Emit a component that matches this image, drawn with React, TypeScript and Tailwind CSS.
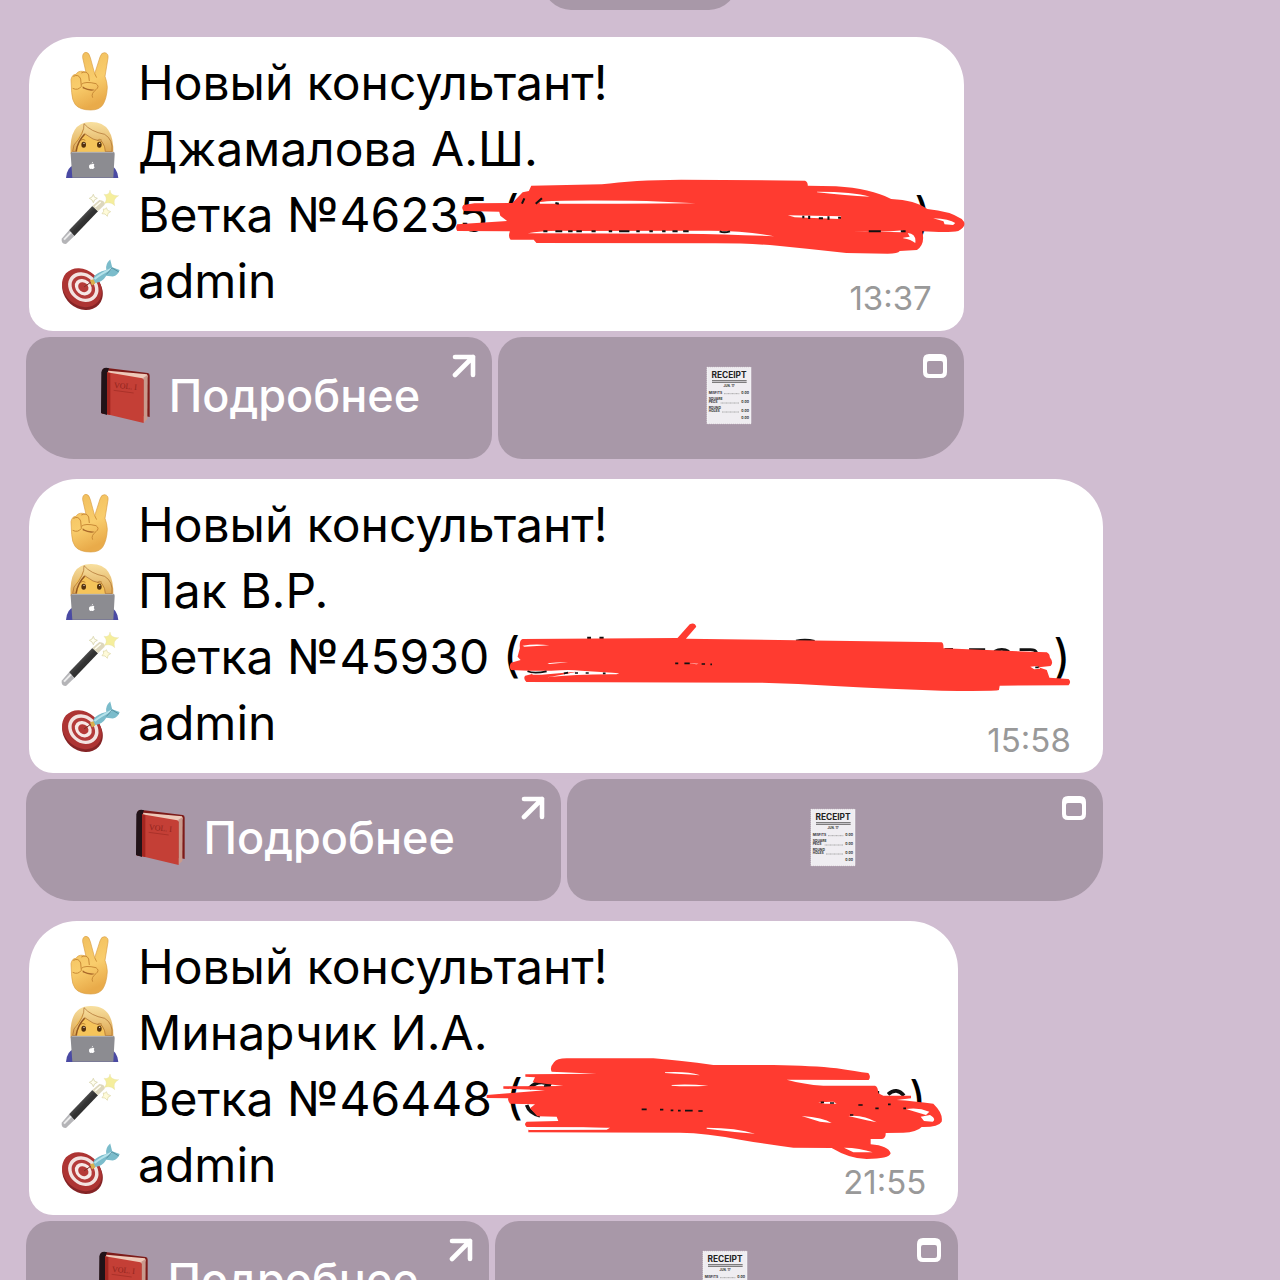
import { ReactNode } from "react";

interface Message {
    id: string;
    name: string;
    branch: string;
    time: string;
    hiddenWidth: string;
    scribble: ReactNode;
}

function VictoryHand() {
    return (
        <svg viewBox="30 33 180 198" className="h-[66px] w-[60px] shrink-0" aria-hidden="true">
            <defs>
                <linearGradient id="skin" x1="0" y1="0" x2="0.3" y2="1">
                    <stop offset="0" stopColor="#f0bd5c" />
                    <stop offset="0.6" stopColor="#f9cd6c" />
                    <stop offset="1" stopColor="#e9ab4a" />
                </linearGradient>
            </defs>
            <path
                d="M108 100 L98 56 Q97 41 108 40 Q117 40 121 56 L134 104 L150 54 Q154 40 164 41 Q176 43 174 57 L165 112 Q171 128 172 145 Q170 180 158 198 Q148 213 122 213 Q90 213 76 197 Q66 184 65 160 L63 122 Q66 106 78 106 Q84 95 98 97 Z"
                fill="url(#skin)"
                stroke="#d99f45"
                strokeWidth="2"
            />
            <path d="M94 102 Q110 94 116 108 L118 126 M70 112 Q86 104 92 120 L94 142 Q84 156 68 148" fill="none" stroke="#c98a36" strokeWidth="3" />
            <path d="M94 136 Q106 126 138 134 Q150 142 138 152 Q122 164 128 176" fill="none" stroke="#c98a36" strokeWidth="3" />
            <path d="M98 142 Q110 152 134 152 Q124 160 98 148 Z" fill="#a9682a" />
            <path d="M134 104 L140 116" stroke="#d2953b" strokeWidth="3" />
        </svg>
    );
}

function Technologist() {
    return (
        <svg viewBox="30 231 180 198" className="h-[66px] w-[60px] shrink-0" aria-hidden="true">
            <defs>
                <linearGradient id="hair" x1="0" y1="0" x2="0" y2="1">
                    <stop offset="0" stopColor="#f8e0a0" />
                    <stop offset="1" stopColor="#dca550" />
                </linearGradient>
            </defs>
            <path d="M48 417 Q50 385 72 378 L180 378 Q202 385 205 417 Z" fill="#4a4aa3" />
            <path d="M62 345 Q56 249 122 249 Q193 247 190 345 Z" fill="url(#hair)" />
            <path d="M74 345 Q68 308 88 290 L104 264 Q128 298 162 300 Q178 312 178 345 Z" fill="#f5c45a" />
            <path d="M102 254 Q104 282 72 318 L68 338 L80 338 Q80 308 104 284 Q128 304 156 308 Q166 322 166 338 L186 338 Q190 302 164 286 Q122 278 102 254 Z" fill="url(#hair)" stroke="#a8682b" strokeWidth="2" />
            <path d="M78 337 Q84 306 104 286" stroke="#8f5420" strokeWidth="4" fill="none" />
            <ellipse cx="101" cy="317" rx="7" ry="9" fill="#54320f" />
            <ellipse cx="148" cy="317" rx="7" ry="9" fill="#54320f" />
            <circle cx="102" cy="313" r="2" fill="#fff" />
            <circle cx="149" cy="313" r="2" fill="#fff" />
            <path d="M92 304 Q99 298 106 304 M142 304 Q149 298 156 304" stroke="#a96b20" strokeWidth="2" fill="none" />
            <path d="M66 339 H190 Q195 339 194 346 L190 416 H67 L62 346 Q61 339 66 339 Z" fill="#8c8c91" />
            <path d="M66 340 H190" stroke="#b3b3b7" strokeWidth="3" />
            <path d="M125 376 Q131 372 133 377 Q129 381 134 385 Q131 391 127 390 Q124 388 121 390 Q116 387 117 380 Q119 374 125 376 Z M125 374 Q125 369 129 368 Q129 373 125 374 Z" fill="#fff" />
        </svg>
    );
}

function Wand() {
    return (
        <svg viewBox="30 9 180 198" className="h-[66px] w-[60px] shrink-0" aria-hidden="true">
            <defs>
                <linearGradient id="stick" x1="0" y1="0" x2="1" y2="1">
                    <stop offset="0.2" stopColor="#777" />
                    <stop offset="0.5" stopColor="#333" />
                    <stop offset="1" stopColor="#222" />
                </linearGradient>
            </defs>
            <path d="M57 154 L127 81 L144 97 L73 171 Z" fill="url(#stick)" />
            <path d="M35 179 L57 154 L73 171 L48 195 Q33 195 35 179 Z" fill="#b4b4b7" />
            <path d="M42 182 L63 160" stroke="#ececec" strokeWidth="6" />
            <path d="M127 81 L148 63 Q165 64 164 77 L144 97 Z" fill="#ddd7bd" />
            <path d="M135 84 L152 69" stroke="#fffdf0" strokeWidth="5" />
            <path d="M180 33 Q182 52 206 50 Q188 58 194 80 Q182 66 162 74 Q176 62 162 46 Q177 50 180 33 Z" fill="#f5ee9c" stroke="#e2dba4" strokeWidth="1" />
            <path d="M130 46 Q131 57 142 58 Q131 61 130 71 Q128 61 118 58 Q128 56 130 46 Z" fill="#fffef0" stroke="#cfca98" strokeWidth="2" />
            <path d="M169 86 Q170 96 182 98 Q171 101 172 112 Q166 102 156 104 Q164 97 160 90 Q167 93 169 86 Z" fill="#fffbd9" stroke="#dbd5a0" strokeWidth="2" />
        </svg>
    );
}

function Target() {
    return (
        <svg viewBox="30 207 184 198" className="h-[66px] w-[60px] shrink-0" aria-hidden="true">
            <ellipse cx="99" cy="334" rx="67" ry="56" transform="rotate(42 99 334)" fill="#852426" />
            <g transform="rotate(42 96 328)">
                <ellipse cx="96" cy="326" rx="66" ry="54" fill="#ad3433" />
                <ellipse cx="98" cy="322" rx="50" ry="42" fill="#f3e3e1" />
                <ellipse cx="98" cy="322" rx="39" ry="32" fill="#b43b3a" />
                <ellipse cx="98" cy="322" rx="28" ry="23" fill="#f6e8e6" />
                <ellipse cx="98" cy="322" rx="17" ry="14" fill="#b53a38" />
            </g>
            <path d="M104 324 L130 306" stroke="#7a3028" strokeWidth="3" />
            <path d="M122 304 L136 300 L138 314 L128 320 Z" fill="#d9b04d" />
            <path d="M132 298 Q134 286 158 276 L172 272 Q168 254 184 240 L190 264 L213 272 Q208 288 192 292 L172 290 Q160 310 138 312 Z" fill="#7bbccb" />
            <path d="M136 300 Q152 286 188 268" stroke="#b5e2ea" strokeWidth="6" fill="none" />
            <path d="M172 286 L190 266 L210 278" stroke="#558f9f" strokeWidth="3" fill="none" />
        </svg>
    );
}

function Book() {
    return (
        <svg viewBox="15 21 165 180" className="h-[60px] w-[55px] shrink-0" aria-hidden="true">
            <path d="M27 38 Q28 25 42 27 L164 42 Q170 42 170 50 L170 174 L160 172 L60 166 L26 164 Z" fill="#7d1b19" />
            <path d="M25 40 Q27 26 40 26 L48 28 L42 44 L42 168 L24 162 Z" fill="#211318" />
            <path d="M46 35 L162 46 L164 54 L154 62 L44 44 Z" fill="#eec9b9" />
            <path d="M151 56 L164 48 L163 180 L151 192 Z" fill="#c99a8d" />
            <path d="M42 40 L148 58 Q152 59 152 64 L152 192 L42 166 Z" fill="#c43f36" />
            <path d="M42 40 L52 42 L52 168 L42 166 Z" fill="#a32620" />
            <text x="62" y="86" fontSize="24" fontFamily="Liberation Serif, serif" fill="#8f241d" transform="rotate(6 62 86)">VOL. I</text>
            <path d="M62 94 L122 102" stroke="#9d2b22" strokeWidth="2" />
        </svg>
    );
}

function Receipt() {
    const rows = [
        { label: "MISFITS", y: 164 },
        { label: "SQUARE", y: 183 },
        { label: "PEGS", y: 192 },
        { label: "ROUND", y: 210 },
        { label: "HOLES", y: 219 },
    ];
    return (
        <svg viewBox="63 81 180 180" className="size-[60px] shrink-0" fontFamily="Inter, sans-serif" aria-hidden="true">
            <path d="M81 85 H213 V254 H81 Z" fill="#efedf1" stroke="#fff" strokeWidth="2" strokeDasharray="4 2" />
            <text x="147" y="118" fontSize="25" fontWeight="700" textAnchor="middle" fill="#222">RECEIPT</text>
            <path d="M96 125 H200 M96 130 H200" stroke="#666" strokeWidth="3" />
            <text x="147" y="143" fontSize="9" fontWeight="700" textAnchor="middle" fill="#333">JUN. 17</text>
            {rows.map((row) => (
                <text key={row.label} x="86" y={row.y} fontSize="10" fontWeight="700" fill="#333">{row.label}</text>
            ))}
            {[164, 192, 219, 240].map((y) => (
                <text key={y} x="207" y={y} fontSize="10" fontWeight="700" textAnchor="end" fill="#333">0.00</text>
            ))}
            <path d="M132 164 H178 M122 192 H178 M126 219 H178" stroke="#888" strokeWidth="2" strokeDasharray="3 1" />
        </svg>
    );
}

const messages: Message[] = [
    {
        id: "m1",
        name: "Джамалова А.Ш.",
        branch: "Ветка №46235 (",
        time: "13:37",
        hiddenWidth: "w-[395px]",
        scribble: (
            <svg viewBox="0 0 1568 300" preserveAspectRatio="none" className="absolute left-[411px] top-[132px] h-[100px] w-[540px]" aria-hidden="true">
                <path
                    d="M265 50 L470 46 Q560 33 700 32 L1060 35 Q1068 38 1068 50 L1150 52 Q1250 58 1310 90 Q1380 93 1415 120 Q1480 126 1515 150 Q1535 170 1505 186 Q1480 192 1400 187 Q1410 225 1385 243 L1335 246 Q1330 254 1300 254 L1180 252 Q1080 240 980 230 Q900 223 800 223 L280 222 L272 212 L205 212 Q197 205 203 187 L50 186 Q44 176 50 166 L195 156 L175 140 L172 128 L70 126 Q60 118 68 108 L100 103 L210 102 L240 70 L258 66 Z"
                    fill="#ff3b30"
                />
                <path d="M290 99 Q340 92 600 96 L742 103 L520 104 L290 104 Z M255 193 Q300 182 400 186 L780 185 Q900 186 970 202 Q850 196 700 194 Z M1095 68 Q1200 68 1248 83 Q1180 80 1095 70 Z M1432 148 Q1480 150 1496 162 L1490 168 L1465 166 L1462 157 Z M1345 206 L1364 203 L1358 192 Q1384 195 1380 222 Q1368 212 1345 208 Z M1010 139 L1165 142 L1160 150 L1030 145 Z M1200 186 Q1290 190 1345 184 L1340 190 Z" fill="#fff" />
                <path d="M238 104 L245 88 M278 104 L296 88 M335 102 L345 104 M300 187 L312 187 M335 187 H355 M372 187 H385 M396 187 H412 M440 187 H452 M490 187 H500 M520 187 H550 M570 187 H580 M608 187 H618 M645 187 H655 M675 187 H690 M706 187 H722 M812 187 Q825 193 842 187 M1055 140 V148 M1072 140 V150 M1100 148 H1112 M1128 142 V152 M1156 146 H1164 M1245 187 H1280 M1338 187 H1352" fill="none" stroke="#111" strokeWidth="6" />
            </svg>
        ),
    },
    {
        id: "m2",
        name: "Пак В.Р.",
        branch: "Ветка №45930 (",
        time: "15:58",
        hiddenWidth: "w-[533px]",
        scribble: (
            <svg viewBox="0 0 1568 300" preserveAspectRatio="none" className="absolute left-[461px] top-[131px] h-[100px] w-[600px]" aria-hidden="true">
                <path d="M254 84 H264 M286 84 H297 M800 93 Q825 87 848 94 M1188 118 H1210 M1252 119 H1294 M1318 124 Q1338 112 1356 124 M1384 119 H1410 Q1424 118 1428 127" fill="none" stroke="#111" strokeWidth="8" />
                <path
                    d="M85 87 L490 84 L522 43 Q535 36 539 50 L512 86 L800 91 L1180 97 Q1186 100 1185 115 L1455 127 Q1463 132 1463 142 Q1474 158 1465 168 L1434 172 L1455 180 L1462 203 L1512 207 Q1520 216 1512 226 L1332 227 L1330 240 Q1320 244 1180 242 Q1050 238 900 228 Q800 220 700 218 L95 216 Q86 205 92 197 L110 192 L100 182 L55 180 Q48 170 55 158 L80 150 L72 140 L78 115 Q76 90 85 87 Z"
                    fill="#ff3b30"
                />
                <path d="M100 182 L160 182 Q210 178 238 182 L320 188 Q350 190 330 193 Q230 192 148 202 Q210 190 225 185 L135 194 L112 194 Z M85 107 Q120 100 155 106 L90 110 Z M150 160 Q180 156 204 157 L155 162 Z M515 160 L545 161 L540 163 Z M1412 170 L1430 168 L1438 176 L1422 178 Z M1375 205 L1390 206 Z" fill="#fff" />
                <path d="M98 184 Q115 192 148 184 M193 190 L204 188 M222 189 H230 M250 189 H258 M295 190 H302 M484 160 H492 M508 160 H522 M553 162 H562 M576 163 H580 M1425 172 H1434" fill="none" stroke="#111" strokeWidth="5" />
            </svg>
        ),
    },
    {
        id: "m3",
        name: "Минарчик И.А.",
        branch: "Ветка №46448 (",
        time: "21:55",
        hiddenWidth: "w-[386px]",
        scribble: (
            <svg viewBox="0 0 1440 390" className="absolute left-[451px] top-[124px] h-[130px] w-[480px]" aria-hidden="true">
                <path d="M212 122 Q180 98 148 130 M140 180 Q148 205 180 212 M1192 138 V158 M1224 148 Q1250 125 1272 152" fill="none" stroke="#111" strokeWidth="11" />
                <path
                    d="M222 52 Q230 40 260 40 L520 40 Q600 46 700 60 L880 60 Q1000 62 1070 70 Q1130 80 1165 84 Q1174 95 1166 105 L920 104 Q970 118 1030 122 L1185 122 Q1194 124 1195 145 L1210 152 L1293 152 L1293 160 L1250 165 Q1300 168 1360 176 Q1390 205 1385 230 Q1375 247 1325 246 Q1310 262 1270 263 L1217 264 Q1218 280 1206 282 L1172 282 L1172 298 Q1225 302 1232 325 Q1228 342 1160 342 Q1110 342 1055 309 L940 308 Q860 298 780 284 Q680 264 600 263 L145 262 L145 254 L380 247 L140 246 Q130 238 140 230 L235 228 L230 215 L172 214 L150 190 L165 178 L90 176 Q82 165 85 160 L20 159 L20 150 L85 145 L195 136 L70 131 L70 124 L250 123 L158 112 L165 97 L136 95 L136 88 L350 86 L215 80 Q208 68 222 52 Z"
                    fill="#ff3b30"
                />
                <path d="M555 82 Q620 78 660 91 Q600 86 555 84 Z M575 120 Q620 116 685 122 Q620 125 575 122 Z M680 248 Q770 248 825 266 Q750 260 680 251 Z M965 213 Q1030 218 1055 234 L1020 230 Z M1105 213 Q1150 208 1190 232 L1160 226 Z M1322 215 L1350 210 Q1370 222 1358 230 L1332 228 Z M1278 192 Q1315 186 1348 200 L1338 210 Z M1092 308 Q1140 308 1178 322 L1120 322 Z M150 250 L390 248 L380 254 L145 255 Z M1015 172 L1060 170 L1070 176 L1035 176 Z" fill="#fff" />
                <path d="M192 123 L212 121 M485 193 H500 M540 194 H550 M572 196 H580 M594 197 H602 M615 197 H638 M655 198 H668 M1022 172 H1032 M1050 174 H1062 M1135 180 H1148 M1110 210 H1120 M1186 190 H1196 M1224 178 H1232 M1270 190 H1278" fill="none" stroke="#111" strokeWidth="5" />
            </svg>
        ),
    },
];

function ArrowIcon() {
    return (
        <svg viewBox="0 0 24 24" className="absolute right-4 top-[17px] size-6" fill="none" stroke="#fff" strokeWidth="4.6" strokeLinecap="round" strokeLinejoin="round" aria-hidden="true">
            <path d="M3 3 H21 V21 M21 3 L3 21" />
        </svg>
    );
}

function WindowIcon() {
    return (
        <svg viewBox="0 0 24 24" className="absolute right-[17px] top-[17px] size-6" aria-hidden="true">
            <path fillRule="evenodd" fill="#fff" d="M6 0 H18 Q24 0 24 6 V18 Q24 24 18 24 H6 Q0 24 0 18 V6 Q0 0 6 0 Z M6 7 Q4 7 4 9 V18 Q4 20 6 20 H18 Q20 20 20 18 V9 Q20 7 18 7 Z" />
        </svg>
    );
}

function Row({ icon, children }: { icon: ReactNode; children: ReactNode }) {
    return (
        <div className="flex h-[66px] items-center gap-[18px]">
            {icon}
            {children}
        </div>
    );
}

function MessageCard({ message }: { message: Message }) {
    return (
        <article className="flex w-fit flex-col gap-[6px]">
            <div className="relative ml-[3px] rounded-t-[48px] rounded-b-3xl bg-white pb-[17px] pl-[31px] pr-8 pt-[13px] text-5xl leading-[66px] whitespace-pre text-black">
                <Row icon={<VictoryHand />}>
                    <p>Новый консультант!</p>
                </Row>
                <Row icon={<Technologist />}>
                    <p>{message.name}</p>
                </Row>
                <Row icon={<Wand />}>
                    <p className="flex">
                        {message.branch}
                        <span className={message.hiddenWidth} />
                        {")"}
                    </p>
                </Row>
                <Row icon={<Target />}>
                    <p>admin</p>
                    <time className="ml-auto self-end text-[33px] leading-8 text-[#999999]">{message.time}</time>
                </Row>
                {message.scribble}
            </div>
            <div className="grid grid-cols-2 gap-[6px]">
                <a
                    href="#details"
                    className="relative flex h-[122px] items-center justify-center gap-4 rounded-3xl rounded-bl-[48px] bg-[#a898a8] pb-1 text-[45px] font-medium text-white"
                >
                    <Book />
                    Подробнее
                    <ArrowIcon />
                </a>
                <button
                    type="button"
                    aria-label="Чек"
                    className="relative flex h-[122px] items-center justify-center rounded-3xl rounded-br-[48px] bg-[#a898a8] pb-1"
                >
                    <Receipt />
                    <WindowIcon />
                </button>
            </div>
        </article>
    );
}

export default function App() {
    return (
        <main className="h-screen overflow-hidden bg-[#d0bdd1] font-['Inter',sans-serif]">
            <div className="flex h-[10px] items-end justify-center overflow-hidden">
                <div className="h-14 w-[194px] shrink-0 rounded-full bg-[#a898a8]" />
            </div>
            <div className="flex flex-col gap-5 pl-[26px] pt-[27px]">
                {messages.map((message) => (
                    <MessageCard key={message.id} message={message} />
                ))}
            </div>
        </main>
    );
}
